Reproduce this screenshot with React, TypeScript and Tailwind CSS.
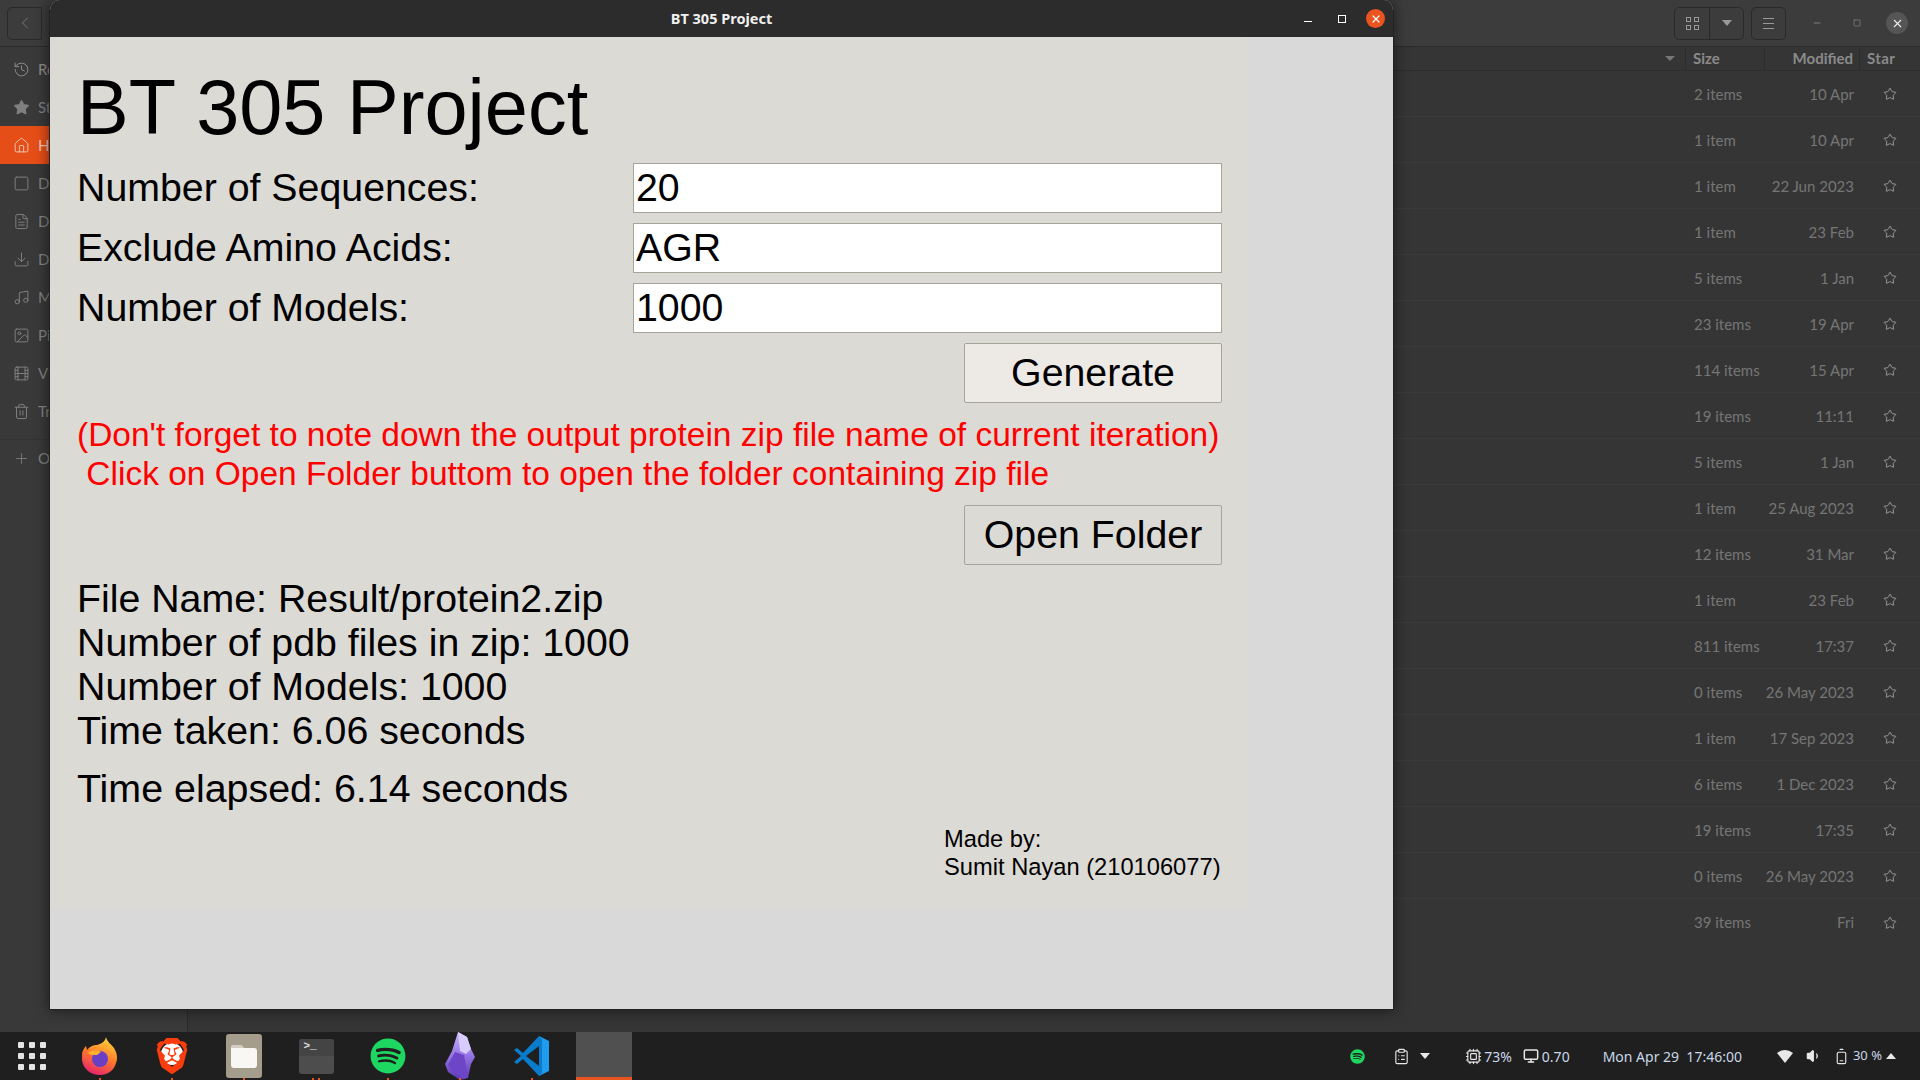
import {
  BatteryLow,
  ChevronLeft,
  ClipboardList,
  Cpu,
  Download,
  FileText,
  Film,
  History,
  Home,
  Image,
  Minus,
  Monitor,
  Music,
  Plus,
  Square,
  Star,
  Trash2,
  Volume1,
  X,
} from 'lucide-react';
import { FaSpotify } from 'react-icons/fa';
import { SiBrave } from 'react-icons/si';

const SIDEBAR = [
  { icon: Star, label: 'Starred', filled: true },
  { icon: Home, label: 'Home', active: true },
  { icon: Square, label: 'Desktop' },
  { icon: FileText, label: 'Documents' },
  { icon: Download, label: 'Downloads' },
  { icon: Music, label: 'Music' },
  { icon: Image, label: 'Pictures' },
  { icon: Film, label: 'Videos' },
  { icon: Trash2, label: 'Trash' },
];

const FILES = [
  ['2 items', '10 Apr'],
  ['1 item', '10 Apr'],
  ['1 item', '22 Jun 2023'],
  ['1 item', '23 Feb'],
  ['5 items', '1 Jan'],
  ['23 items', '19 Apr'],
  ['114 items', '15 Apr'],
  ['19 items', '11:11'],
  ['5 items', '1 Jan'],
  ['1 item', '25 Aug 2023'],
  ['12 items', '31 Mar'],
  ['1 item', '23 Feb'],
  ['811 items', '17:37'],
  ['0 items', '26 May 2023'],
  ['1 item', '17 Sep 2023'],
  ['6 items', '1 Dec 2023'],
  ['19 items', '17:35'],
  ['0 items', '26 May 2023'],
  ['39 items', 'Fri'],
];

const FORM_ROWS = [
  { label: 'Number of Sequences:', value: '20' },
  { label: 'Exclude Amino Acids:', value: 'AGR' },
  { label: 'Number of Models:', value: '1000' },
];

const INFO_LINES = [
  'File Name: Result/protein2.zip',
  'Number of pdb files in zip: 1000',
  'Number of Models: 1000',
  'Time taken: 6.06 seconds',
];

function Firefox() {
  return (
    <svg width="36" height="40" viewBox="0 0 36 40">
      <defs>
        <linearGradient id="ffa" x1="0.7" y1="0" x2="0.3" y2="1">
          <stop offset="0" stopColor="#ffd53a" />
          <stop offset="0.5" stopColor="#ff7a2a" />
          <stop offset="1" stopColor="#e5206f" />
        </linearGradient>
      </defs>
      <path d="M24 1c1 5 5 7 8 11 3 5 4 10 2 15-2 8-9 12-16 12C9 39 1 33 0 24c-1-6 1-11 4-14l1 4c3-4 7-5 10-5 4-1 8-3 9-8z" fill="url(#ffa)" />
      <circle cx="18" cy="23" r="8" fill="#6a3fc4" />
      <path d="M6 17c4-3 9-3 13-1l-4 3c-3 0-7 0-9-2z" fill="#ffb02e" />
    </svg>
  );
}

function Brave() {
  return (
    <span className="relative flex h-[42px] w-[36px] items-center justify-center">
      <span className="absolute left-[7px] top-[8px] h-[22px] w-[22px] rounded-full bg-white" />
      <SiBrave className="relative text-[42px] text-[#fb3c0c]" />
    </span>
  );
}

function FilesIcon() {
  return (
    <span className="flex h-[44px] w-[36px] items-center justify-center rounded-[3px] bg-[#a59d8b]">
      <svg width="28" height="28" viewBox="0 0 28 28">
        <path d="M1 6a3 3 0 013-3h7l3 3h10a3 3 0 013 3v14a3 3 0 01-3 3H4a3 3 0 01-3-3z" fill="#f8f7f4" />
        <path d="M1 6a3 3 0 013-3h7l3 3H1z" fill="#d2cdc2" />
      </svg>
    </span>
  );
}

function TerminalIcon() {
  return (
    <span className="flex h-[35px] w-[35px] flex-col overflow-hidden rounded-[3px] bg-[#4d4d4d]">
      <span className="h-[17px] whitespace-nowrap bg-[#444444] pl-[5px] font-['Liberation_Mono',monospace] text-[11px] font-bold leading-[15px] text-[#e0e0e0]">
        &gt;_
      </span>
    </span>
  );
}

function Obsidian() {
  return (
    <svg width="32" height="50" viewBox="0 0 32 50">
      <defs>
        <linearGradient id="obs" x1="0.5" y1="0" x2="0.5" y2="1">
          <stop offset="0" stopColor="#c9b6ff" />
          <stop offset="0.55" stopColor="#8e6ee0" />
          <stop offset="1" stopColor="#5a36b0" />
        </linearGradient>
      </defs>
      <path d="M14 1l9 5 4 12 4 8-4 7-3 14-8 2-12-8-3-8 7-13z" fill="url(#obs)" />
      <path d="M14 1l9 5 4 12-5 5-6-3z" fill="#d8ccff" />
      <path d="M4 34l7-13 9 3 4 22-4 2-12-8z" fill="#6d46c8" />
    </svg>
  );
}

function VsCode() {
  return (
    <svg width="36" height="42" viewBox="0 0 36 42">
      <path d="M25 1l10 5v30l-10 5z" fill="#1f9cf0" />
      <path d="M25 1L9 18 3 13l-3 2 7 6-7 6 3 2 6-5 16 17 3-3V4z" fill="#0a7ccc" />
      <path d="M25 11v20L12 21z" fill="#1f1f1f" />
    </svg>
  );
}

function DockItem({ children, dots = 1 }: { children: React.ReactNode; dots?: number }) {
  return (
    <div className="relative flex h-12 w-[72px] items-center justify-center">
      {children}
      <div className="absolute bottom-0 flex gap-1">
        {Array.from({ length: dots }).map((_, i) => (
          <span key={i} className="h-[2px] w-[2px] bg-[#e95420]" />
        ))}
      </div>
    </div>
  );
}

export default function App() {
  return (
    <div className="relative flex h-[1080px] w-[1920px] flex-col overflow-hidden bg-[#353535] font-['Lato','Noto_Sans',sans-serif]">
      {/* ───────────── file manager behind ───────────── */}
      <div className="flex h-[47px] shrink-0 items-center border-b border-[#2a2a2a] bg-[#3c3c3c]">
        <div className="ml-[7px] flex h-[33px] w-[35px] items-center justify-center rounded-l-[5px] border border-[#2a2a2a] text-[#777777]">
          <ChevronLeft size={20} strokeWidth={1.2} />
        </div>
        <div className="ml-auto flex h-[33px] w-[70px] rounded-[5px] border border-[#2a2a2a]">
          <div className="flex w-[35px] items-center justify-center border-r border-[#2a2a2a]">
            <div className="grid grid-cols-2 gap-[3px]">
              <span className="h-[5px] w-[5px] border border-[#999999]" />
              <span className="h-[5px] w-[5px] border border-[#999999]" />
              <span className="h-[5px] w-[5px] border border-[#999999]" />
              <span className="h-[5px] w-[5px] border border-[#999999]" />
            </div>
          </div>
          <div className="flex flex-1 items-center justify-center">
            <span className="h-0 w-0 border-x-[5px] border-t-[6px] border-x-transparent border-t-[#999999]" />
          </div>
        </div>
        <div className="ml-[7px] flex h-[33px] w-[35px] flex-col items-center justify-center gap-[4px] rounded-[5px] border border-[#2a2a2a]">
          <span className="h-px w-[11px] bg-[#999999]" />
          <span className="h-px w-[11px] bg-[#999999]" />
          <span className="h-px w-[11px] bg-[#999999]" />
        </div>
        <div className="ml-[25px] flex w-[12px] justify-center text-[#a0a0a0]">
          <Minus size={10} strokeWidth={1.5} />
        </div>
        <div className="ml-[28px] flex w-[12px] justify-center text-[#a0a0a0]">
          <Square size={8} strokeWidth={1.5} />
        </div>
        <div className="ml-[23px] mr-[12px] flex h-[22px] w-[22px] items-center justify-center rounded-full bg-[#555555] text-[#eeeeee]">
          <X size={13} strokeWidth={2} />
        </div>
      </div>

      <div className="flex min-h-0 flex-1">
        <aside className="w-[188px] shrink-0 border-r border-[#2a2a2a] bg-[#393939] pt-[3px]">
          <div className="flex h-[38px] items-center pl-[13px] text-[15px] text-[#8c8c8c]">
            <History size={17} strokeWidth={1.4} className="mr-[8px]" />
            Recent
          </div>
          {SIDEBAR.map(({ icon: Icon, label, active, filled }) => (
            <div
              key={label}
              className={
                active
                  ? 'flex h-[38px] items-center bg-[#e64e18] pl-[13px] text-[15px] text-[#f2c4b2]'
                  : 'flex h-[38px] items-center pl-[13px] text-[15px] text-[#808080]'
              }
            >
              <Icon size={17} strokeWidth={1.4} fill={filled ? 'currentColor' : 'none'} className="mr-[8px]" />
              {label}
            </div>
          ))}
          <div className="mt-[9px] flex h-[38px] items-center border-t border-[#333333] pl-[13px] text-[15px] text-[#808080]">
            <Plus size={17} strokeWidth={1.2} className="mr-[8px]" />
            Other Locations
          </div>
        </aside>

        <main className="min-w-0 flex-1 text-[15px] text-[#757575]">
          <div className="flex h-[24px] border-b border-[#2d2d2d] text-[15px] font-bold text-[#8a8a8a]">
            <div className="flex flex-1 items-center justify-end border-r border-[#2d2d2d] pr-[10px]">
              <span className="h-0 w-0 border-x-[5px] border-t-[5px] border-x-transparent border-t-[#777777]" />
            </div>
            <div className="flex w-[79px] items-center border-r border-[#2d2d2d] pl-[7px]">Size</div>
            <div className="flex w-[95px] items-center justify-end border-r border-[#2d2d2d] pr-[6px]">Modified</div>
            <div className="flex w-[60px] items-center pl-[7px] tracking-[0.4px]">Star</div>
          </div>
          {FILES.map(([size, modified], i) => (
            <div key={i} className="flex h-[46px] items-center border-b border-[#3b3b3b] pt-[1px] last:border-b-0">
              <div className="flex-1" />
              <div className="w-[79px] pl-[8px]">{size}</div>
              <div className="w-[95px] whitespace-nowrap pr-[6px] text-right">{modified}</div>
              <div className="flex w-[60px] justify-center text-[#aaaaaa]">
                <Star size={14} strokeWidth={1.4} />
              </div>
            </div>
          ))}
        </main>
      </div>

      {/* ───────────── dock ───────────── */}
      <footer className="flex h-12 shrink-0 items-center bg-[#1f1f1f]">
        <div className="grid w-[64px] shrink-0 grid-cols-3 justify-items-center gap-y-[5px] px-[16px]">
          {Array.from({ length: 9 }).map((_, i) => (
            <span key={i} className="h-[6px] w-[6px] rounded-[1px] bg-[#e4e4e4]" />
          ))}
        </div>
        <DockItem><Firefox /></DockItem>
        <DockItem><Brave /></DockItem>
        <DockItem><FilesIcon /></DockItem>
        <DockItem dots={2}><TerminalIcon /></DockItem>
        <DockItem><FaSpotify className="text-[36px] text-[#1ed760]" /></DockItem>
        <DockItem><Obsidian /></DockItem>
        <DockItem><VsCode /></DockItem>
        <div className="ml-[8px] h-12 w-[56px] border-b-[3px] border-[#e95420] bg-[#505050]" />

        <div className="ml-auto flex items-center font-['Noto_Sans',sans-serif] text-[14px] text-[#c8d8e8]">
          <FaSpotify className="text-[15px] text-[#1ed760]" />
          <ClipboardList size={17} strokeWidth={1.6} className="ml-[28px] text-[#e8e8e8]" />
          <span className="ml-[10px] h-0 w-0 border-x-[5px] border-t-[6px] border-x-transparent border-t-[#e8e8e8]" />
          <Cpu size={17} strokeWidth={1.6} className="ml-[35px] text-[#e8e8e8]" />
          <span className="ml-[2px]">73%</span>
          <Monitor size={16} strokeWidth={2.2} className="ml-[11px] text-[#e8e8e8]" />
          <span className="ml-[3px]">0.70</span>
          <span className="ml-[33px] whitespace-pre">Mon Apr 29  17:46:00</span>
          <svg width="16" height="14" viewBox="0 0 16 14" className="ml-[35px]">
            <path d="M0 4Q8-2 16 4L8 14z" fill="#e8e8e8" />
          </svg>
          <Volume1 size={16} strokeWidth={1.8} fill="#e8e8e8" className="ml-[13px] text-[#e8e8e8]" />
          <BatteryLow size={17} strokeWidth={1.6} className="ml-[11px] -rotate-90 text-[#e8e8e8]" />
          <span className="ml-[3px] text-[13px]">30 %</span>
          <span className="ml-[4px] mr-[24px] h-0 w-0 border-x-[5px] border-b-[6px] border-x-transparent border-b-[#e8e8e8]" />
        </div>
      </footer>

      {/* ───────────── BT 305 window, floating over the desktop ───────────── */}
      <div className="absolute left-[49px] top-0 flex h-[1010px] w-[1345px] flex-col overflow-hidden rounded-t-[10px] border-x border-b border-[#222222] bg-[#d9d9d9] font-['Liberation_Sans',Arial,sans-serif] shadow-[0_0_14px_rgba(0,0,0,0.55)]">
        <div className="relative flex h-[37px] shrink-0 items-center justify-center bg-[#2c2c2c] font-['Noto_Sans',sans-serif] text-[14.5px] font-bold text-[#f0f0f0]">
          BT 305 Project
          <div className="absolute right-[8px] flex items-center text-white">
            <span className="mt-[6px] h-[1.5px] w-[8px] bg-white" />
            <span className="ml-[26px] h-[8px] w-[8px] border border-white" />
            <span className="ml-[20px] flex h-[19px] w-[19px] items-center justify-center rounded-full bg-[#e95420]">
              <X size={12} strokeWidth={2.4} />
            </span>
          </div>
        </div>

        <div className="h-[872px] w-[1197px] bg-[#dcdad5] pl-[27px] pr-[25px] text-black">
          <h1 className="flex h-[126px] items-center pt-[15px] text-[77.5px] font-normal leading-none">BT 305 Project</h1>

          <div className="flex flex-col gap-[10px]">
            {FORM_ROWS.map((row) => (
              <div key={row.label} className="flex h-[50px] items-center">
                <label className="w-[556px] text-[39.3px] leading-none">{row.label}</label>
                <div className="flex h-[50px] flex-1 items-center border border-[#a7a499] bg-white pl-[2px] text-[39.3px] leading-none">
                  {row.value}
                </div>
              </div>
            ))}
          </div>

          <div className="mt-[10px] flex justify-end">
            <button className="h-[60px] w-[258px] rounded-[2px] border border-[#a7a499] bg-[#edeae5] pb-[1px] text-[39.3px] leading-none">
              Generate
            </button>
          </div>

          <p className="mt-[12px] whitespace-pre text-[33.5px] leading-[39px] text-[#ff0000]">
            {"(Don't forget to note down the output protein zip file name of current iteration)\n Click on Open Folder buttom to open the folder containing zip file"}
          </p>

          <div className="mt-[12px] flex justify-end">
            <button className="h-[60px] w-[258px] rounded-[2px] border border-[#a7a499] bg-[#dcdad5] pb-[1px] text-[39.3px] leading-none">
              Open Folder
            </button>
          </div>

          <div className="mt-[11px] text-[39.3px] leading-[44px]">
            {INFO_LINES.map((line) => (
              <div key={line}>{line}</div>
            ))}
          </div>
          <div className="mt-[14px] text-[39.4px] leading-[44px]">Time elapsed: 6.14 seconds</div>

          <div className="ml-[867px] mt-[15px] whitespace-nowrap text-[23.7px] leading-[28px]">
            <div>Made by:</div>
            <div>Sumit Nayan (210106077)</div>
          </div>
        </div>
      </div>
    </div>
  );
}
